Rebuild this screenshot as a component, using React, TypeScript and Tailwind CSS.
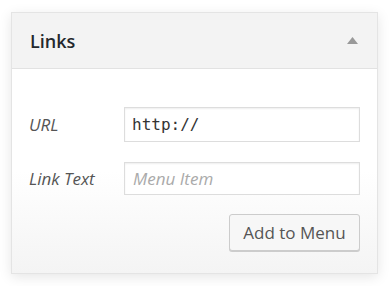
export default function App() {
  return (
    <div className="w-[391px] h-[286px] bg-white pt-[12px] pl-[11px] font-['Open_Sans',sans-serif]">
      <div className="w-[367px] h-[262px] border border-[#e4e4e4] shadow-[0_3px_12px_rgba(0,0,0,0.10)] flex flex-col">
        {/* header */}
        <div className="h-[56px] shrink-0 bg-[#f3f3f3] border-b border-[#e2e2e2] flex items-center justify-between pl-[18px] pr-[19px]">
          <h3 className="text-[18px] font-semibold text-[#23282d] leading-none">Links</h3>
          <svg width="11" height="7" viewBox="0 0 11 7">
            <path d="M5.5 0 L11 7 L0 7 Z" fill="#999" />
          </svg>
        </div>

        {/* body */}
        <div className="flex-1 bg-gradient-to-b from-white via-white to-[#f4f4f4] px-[17px] pt-[38px]">
          <div className="flex items-center">
            <label className="w-[95px] text-[17px] italic text-[#555]">URL</label>
            <input
              readOnly
              value="http://"
              className="flex-1 h-[35px] border border-[#ddd] bg-white pl-[7px] text-[16px] text-[#333] font-['DejaVu_Sans_Mono',monospace] outline-none shadow-[inset_0_1px_2px_rgba(0,0,0,0.07)]"
            />
          </div>
          <div className="flex items-center mt-[20px]">
            <label className="w-[95px] text-[17px] italic text-[#555]">Link Text</label>
            <input
              readOnly
              placeholder="Menu Item"
              className="flex-1 h-[33px] border border-[#ddd] bg-white pl-[8px] text-[17px] italic placeholder:text-[#aaa] outline-none shadow-[inset_0_1px_2px_rgba(0,0,0,0.07)]"
            />
          </div>
          <div className="flex justify-end mt-[19px]">
            <button className="h-[37px] w-[131px] rounded-[3px] border border-[#ccc] bg-[#f7f7f7] text-[17px] text-[#555] shadow-[0_1px_0_#ccc]">
              Add to Menu
            </button>
          </div>
        </div>
      </div>
    </div>
  )
}
